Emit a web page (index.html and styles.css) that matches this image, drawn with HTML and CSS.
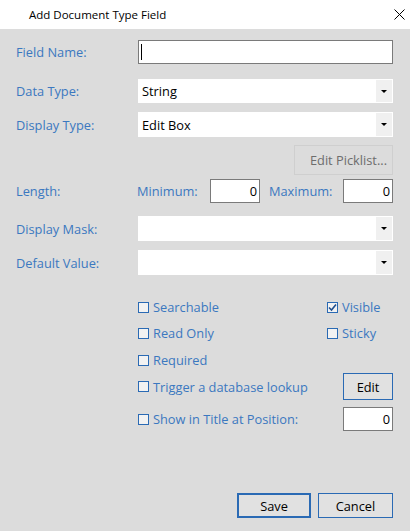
FILE: index.html
```html
<!DOCTYPE html>
<html lang="en">
<head>
  <meta charset="UTF-8">
  <title>Add Document Type Field</title>
  <link rel="stylesheet" href="styles.css">
</head>
<body>
  <div class="dialog">
    <div class="titlebar">
      <span class="title">Add Document Type Field</span>
      <svg class="close" width="11" height="11" viewBox="0 0 11 11"><path d="M0.5 0.5 L10.5 10.5 M10.5 0.5 L0.5 10.5" stroke="#000" stroke-width="1"/></svg>
    </div>

    <div class="form">
      <div class="row r-name">
        <label class="label">Field Name:</label>
        <div class="textbox focused"><span class="caret"></span></div>
      </div>

      <div class="row r-datatype">
        <label class="label">Data Type:</label>
        <div class="combo"><span class="combo-text">String</span><span class="arrow"><i></i></span></div>
      </div>

      <div class="row r-display">
        <label class="label">Display Type:</label>
        <div class="combo"><span class="combo-text">Edit Box</span><span class="arrow"><i></i></span></div>
      </div>

      <div class="row r-picklist">
        <button class="btn disabled">Edit Picklist...</button>
      </div>

      <div class="row r-length">
        <label class="label">Length:</label>
        <span class="sublabel">Minimum:</span>
        <div class="numbox min">0</div>
        <span class="sublabel max-label">Maximum:</span>
        <div class="numbox">0</div>
      </div>

      <div class="row r-mask">
        <label class="label">Display Mask:</label>
        <div class="combo flat"><span class="combo-text"></span><span class="arrow"><i></i></span></div>
      </div>

      <div class="row r-default">
        <label class="label">Default Value:</label>
        <div class="combo"><span class="combo-text"></span><span class="arrow"><i></i></span></div>
      </div>

      <div class="checks">
        <div class="check-row r-c1">
          <label class="check"><span class="box"></span>Searchable</label>
          <label class="check right"><span class="box checked"><svg width="9" height="9" viewBox="0 0 9 9"><path d="M1 4.5 L3.5 7 L8 1.5" fill="none" stroke="#1f4f8f" stroke-width="1.6"/></svg></span>Visible</label>
        </div>
        <div class="check-row r-c2">
          <label class="check"><span class="box"></span>Read Only</label>
          <label class="check right"><span class="box"></span>Sticky</label>
        </div>
        <div class="check-row r-c3">
          <label class="check"><span class="box"></span>Required</label>
        </div>
        <div class="check-row r-c4">
          <label class="check"><span class="box"></span>Trigger a database lookup</label>
          <button class="btn edit">Edit</button>
        </div>
        <div class="check-row r-c5">
          <label class="check"><span class="box"></span>Show in Title at Position:</label>
          <div class="numbox pos">0</div>
        </div>
      </div>
    </div>

    <div class="footer">
      <button class="btn primary">Save</button>
      <button class="btn cancel">Cancel</button>
    </div>
  </div>
</body>
</html>
```

FILE: styles.css
```css
body {
  margin: 0;
  font-family: "Open Sans", "Noto Sans", sans-serif;
  font-size: 12.8px;
  background: #dcdcdc;
}
.dialog {
  width: 410px;
  height: 531px;
  background: #dcdcdc;
  display: flex;
  flex-direction: column;
}
.titlebar {
  height: 29px;
  background: #fff;
  display: flex;
  align-items: center;
  justify-content: space-between;
  padding: 0 5px 0 29px;
  box-sizing: border-box;
  flex-shrink: 0;
}
.title {
  color: #000;
  font-size: 11.5px;
}
.close {
  display: block;
}
.form {
  padding: 0 17px 0 16px;
  flex: 1;
}
.row {
  display: flex;
  align-items: center;
}
.label {
  width: 122px;
  flex-shrink: 0;
  color: #3b78c0;
}
.r-name { margin-top: 11px; height: 24px; }
.r-datatype { margin-top: 15px; height: 24px; }
.r-display { margin-top: 9px; height: 25px; }
.r-picklist { margin-top: 8px; height: 30px; justify-content: flex-end; }
.r-length { margin-top: 4px; height: 24px; }
.r-mask { margin-top: 13px; height: 25px; }
.r-default { margin-top: 9px; height: 25px; }

.textbox {
  flex: 1;
  height: 100%;
  box-sizing: border-box;
  background: #fff;
  border: 1px solid #7a7a7a;
  display: flex;
  align-items: center;
  padding-left: 2px;
}
.caret {
  width: 1px;
  height: 16px;
  background: #000;
}
.combo {
  flex: 1;
  height: 100%;
  box-sizing: border-box;
  background: #fff;
  border: 1px solid #fff;
  display: flex;
  align-items: center;
}
.combo-text {
  flex: 1;
  padding-left: 3px;
  color: #000;
}
.arrow {
  width: 16px;
  height: 100%;
  background: #f0f0f0;
  display: flex;
  align-items: center;
  justify-content: center;
}
.arrow i {
  width: 0;
  height: 0;
  border-left: 3px solid transparent;
  border-right: 3px solid transparent;
  border-top: 3px solid #000;
}
.sublabel {
  color: #3b78c0;
  width: 73px;
  margin-left: -1px;
}
.sublabel.max-label {
  width: 74px;
  margin-left: 9px;
}
.numbox {
  width: 50px;
  height: 100%;
  box-sizing: border-box;
  background: #fff;
  border: 1px solid #7a7a7a;
  text-align: right;
  padding-right: 2px;
  line-height: 22px;
  color: #000;
}
.btn {
  font-family: inherit;
  font-size: 12.8px;
  background: #e1e1e1;
  border: 1px solid #2a6ab4;
  color: #000;
  padding: 0;
  box-sizing: border-box;
}
.btn.disabled {
  width: 99px;
  height: 30px;
  background: #dcdcdc;
  border-color: #cfcfcf;
  color: #6d6d6d;
  text-align: right;
  padding-right: 5px;
}
.checks {
  margin-left: 122px;
  margin-top: 25px;
}
.check-row {
  display: flex;
  align-items: center;
  justify-content: space-between;
}
.r-c1 { height: 14px; }
.r-c2 { height: 14px; margin-top: 12px; }
.r-c3 { height: 14px; margin-top: 13px; }
.r-c4 { height: 27px; margin-top: 6px; }
.r-c5 { height: 24px; margin-top: 7px; }
.check {
  display: flex;
  align-items: center;
  color: #3b78c0;
}
.check.right {
  width: 66px;
}
.box {
  width: 11px;
  height: 11px;
  box-sizing: border-box;
  border: 1px solid #2a6ab4;
  background: #f2f2f2;
  margin-right: 4px;
  display: flex;
  align-items: center;
  justify-content: center;
}
.btn.edit {
  width: 50px;
  height: 27px;
}
.footer {
  display: flex;
  justify-content: flex-end;
  gap: 7px;
  padding: 0 17px 13px 0;
}
.btn.primary {
  width: 74px;
  height: 25px;
  border: 2px solid #2a6ab4;
}
.btn.cancel {
  width: 75px;
  height: 25px;
}
```
